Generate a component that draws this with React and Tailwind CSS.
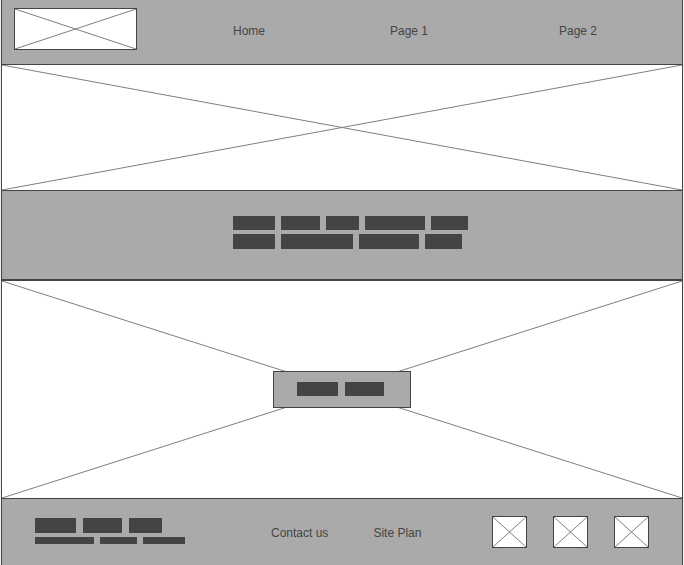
function Cross() {
  return (
    <svg className="absolute inset-0 h-full w-full" aria-hidden="true" stroke="#7f7f7f" strokeWidth="1">
      <line x1="0" y1="0" x2="100%" y2="100%" />
      <line x1="0" y1="100%" x2="100%" y2="0" />
    </svg>
  );
}

function Bars({ height, widths, gap = "gap-1.5" }) {
  return (
    <span className={`flex ${gap} ${height}`}>
      {widths.map((width, i) => (
        <span key={i} className={`bg-[#444] ${width}`} />
      ))}
    </span>
  );
}

export default function App() {
  return (
    <div className="min-h-screen bg-[#f4f4f4] px-px font-['Liberation_Sans',Arial,sans-serif] text-xs text-[#444]">
      <div className="flex min-h-screen flex-col border-x border-[#444] bg-[#aaa]">
        <header className="flex items-center border-b border-[#444] pt-2 pb-3.5 pl-3">
          <a href="#home" aria-label="Logo" className="relative h-[42px] w-[123px] border border-[#444] bg-white">
            <Cross />
          </a>
          <nav aria-label="Main" className="ml-24 grid flex-1 grid-cols-[157fr_169fr_123fr]">
            <a href="#home" className="mt-1 justify-self-start">Home</a>
            <a href="#page-1" className="mt-1 justify-self-start">Page 1</a>
            <a href="#page-2" className="mt-1 justify-self-start">Page 2</a>
          </nav>
        </header>

        <main>
          <section aria-label="Banner" className="relative h-[126px] border-b border-[#444] bg-white">
            <Cross />
          </section>

          <section aria-label="Introduction" className="flex flex-col gap-1 border-b-2 border-[#444] pt-[25px] pb-[30px] pl-[34%]">
            <Bars height="h-3.5" widths={["w-[42px]", "w-[39px]", "w-[33px]", "w-[60px]", "w-[37px]"]} />
            <Bars height="h-[15px]" widths={["w-[42px]", "w-[72px]", "w-[60px]", "w-[37px]"]} />
          </section>

          <section aria-label="Feature" className="relative flex h-[218px] items-center justify-center border-b border-[#444] bg-white">
            <Cross />
            <button type="button" aria-label="Learn more" className="relative flex border border-[#444] bg-[#aaa] pt-2.5 pr-[26px] pb-[11px] pl-[23px]">
              <Bars height="h-3.5" gap="gap-[7px]" widths={["w-[41px]", "w-[39px]"]} />
            </button>
          </section>
        </main>

        <footer className="flex flex-1 items-center px-[33px]">
          <div className="flex flex-col gap-1 pb-0.5">
            <Bars height="h-[15px]" gap="gap-[7px]" widths={["w-[41px]", "w-[39px]", "w-[33px]"]} />
            <Bars height="h-[7px]" widths={["w-[59px]", "w-[37px]", "w-[42px]"]} />
          </div>
          <nav aria-label="Footer" className="ml-[86px] flex gap-[45px] pt-0.5">
            <a href="#contact">Contact us</a>
            <a href="#site-plan">Site Plan</a>
          </nav>
          <div className="ml-auto flex gap-[26px]">
            <a href="#social-1" aria-label="Social link 1" className="relative h-8 w-[35px] border border-[#444] bg-white"><Cross /></a>
            <a href="#social-2" aria-label="Social link 2" className="relative h-8 w-[35px] border border-[#444] bg-white"><Cross /></a>
            <a href="#social-3" aria-label="Social link 3" className="relative h-8 w-[35px] border border-[#444] bg-white"><Cross /></a>
          </div>
        </footer>
      </div>
    </div>
  );
}
